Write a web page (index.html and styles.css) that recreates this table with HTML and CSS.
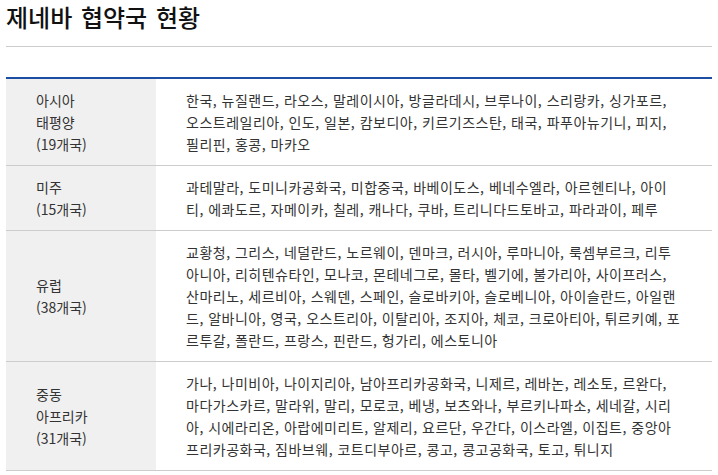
FILE: index.html
```html
<!DOCTYPE html>
<html lang="ko">
<head>
<meta charset="utf-8">
<title>제네바 협약국 현황</title>
<link rel="stylesheet" href="styles.css">
</head>
<body>
<div class="page">
  <h1 class="title">제네바 협약국 현황</h1>
  <table class="nations">
    <tbody>
      <tr>
        <th>아시아<br>태평양<br>(19개국)</th>
        <td>한국, 뉴질랜드, 라오스, 말레이시아, 방글라데시, 브루나이, 스리랑카, 싱가포르, 오스트레일리아, 인도, 일본, 캄보디아, 키르기즈스탄, 태국, 파푸아뉴기니, 피지, 필리핀, 홍콩, 마카오</td>
      </tr>
      <tr>
        <th>미주<br>(15개국)</th>
        <td>과테말라, 도미니카공화국, 미합중국, 바베이도스, 베네수엘라, 아르헨티나, 아이티, 에콰도르, 자메이카, 칠레, 캐나다, 쿠바, 트리니다드토바고, 파라과이, 페루</td>
      </tr>
      <tr>
        <th>유럽<br>(38개국)</th>
        <td>교황청, 그리스, 네덜란드, 노르웨이, 덴마크, 러시아, 루마니아, 룩셈부르크, 리투아니아, 리히텐슈타인, 모나코, 몬테네그로, 몰타, 벨기에, 불가리아, 사이프러스, 산마리노, 세르비아, 스웨덴, 스페인, 슬로바키아, 슬로베니아, 아이슬란드, 아일랜드, 알바니아, 영국, 오스트리아, 이탈리아, 조지아, 체코, 크로아티아, 튀르키예, 포르투갈, 폴란드, 프랑스, 핀란드, 헝가리, 에스토니아</td>
      </tr>
      <tr>
        <th>중동<br>아프리카<br>(31개국)</th>
        <td>가나, 나미비아, 나이지리아, 남아프리카공화국, 니제르, 레바논, 레소토, 르완다, 마다가스카르, 말라위, 말리, 모로코, 베냉, 보츠와나, 부르키나파소, 세네갈, 시리아, 시에라리온, 아랍에미리트, 알제리, 요르단, 우간다, 이스라엘, 이집트, 중앙아프리카공화국, 짐바브웨, 코트디부아르, 콩고, 콩고공화국, 토고, 튀니지</td>
      </tr>
    </tbody>
  </table>
</div>
</body>
</html>
```

FILE: styles.css
```css
html, body {
  margin: 0;
  padding: 0;
  background: #ffffff;
}

body {
  font-family: "Noto Sans CJK KR", "Noto Sans", sans-serif;
  color: #333333;
}

.page {
  padding: 0 6px;
}

.title {
  margin: 0 0 30px 0;
  padding: 1px 0 14px 0;
  font-size: 24px;
  line-height: 31px;
  font-weight: 500;
  word-spacing: 2px;
  color: #111111;
  border-bottom: 1px solid #cccccc;
}

.nations {
  width: 100%;
  border-collapse: collapse;
  border-top: 2px solid #1c4ea3;
  font-size: 14px;
  line-height: 22px;
}

.nations th,
.nations td {
  padding: 10px 30px;
  border-bottom: 1px solid #cccccc;
  vertical-align: middle;
  text-align: left;
  font-weight: 400;
}

.nations th {
  width: 90px;
  background: #f0f0f0;
  color: #333333;
}

.nations td {
  color: #333333;
  letter-spacing: 0.5px;
}
```
